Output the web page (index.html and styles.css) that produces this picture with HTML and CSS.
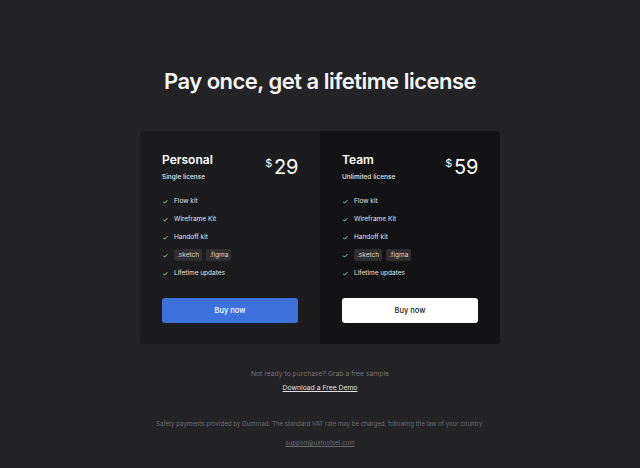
FILE: index.html
```
<!DOCTYPE html>
<html lang="en">
<head>
    <meta charset="UTF-8">
    <title>Pricing</title>
    <link rel="stylesheet" href="styles.css">
</head>
<body>
<div class="page">
    <h1 class="headline">Pay once, get a lifetime license</h1>

    <div class="plans">
        <div class="plan personal">
            <div class="planHead">
                <div>
                    <div class="planName">Personal</div>
                    <div class="planSub">Single license</div>
                </div>
                <div class="price"><span class="currency">$</span>29</div>
            </div>
            <ul class="features">
                <li><span class="check">&#10003;</span>Flow kit</li>
                <li><span class="check">&#10003;</span>Wireframe Kit</li>
                <li><span class="check">&#10003;</span>Handoff kit</li>
                <li><span class="check">&#10003;</span><span class="tag">.sketch</span><span class="tag">.figma</span></li>
                <li><span class="check">&#10003;</span>Lifetime updates</li>
            </ul>
            <a class="buyBtn blue" href="#">Buy now</a>
        </div>
        <div class="plan team">
            <div class="planHead">
                <div>
                    <div class="planName">Team</div>
                    <div class="planSub">Unlimited license</div>
                </div>
                <div class="price"><span class="currency">$</span>59</div>
            </div>
            <ul class="features">
                <li><span class="check">&#10003;</span>Flow kit</li>
                <li><span class="check">&#10003;</span>Wireframe Kit</li>
                <li><span class="check">&#10003;</span>Handoff kit</li>
                <li><span class="check">&#10003;</span><span class="tag">.sketch</span><span class="tag">.figma</span></li>
                <li><span class="check">&#10003;</span>Lifetime updates</li>
            </ul>
            <a class="buyBtn white" href="#">Buy now</a>
        </div>
    </div>

    <p class="sample">Not ready to purchase? Grab a free sample</p>
    <a class="demo" href="#">Download a Free Demo</a>

    <p class="legal">Safety payments provided by Gumroad. The standard VAT rate may be charged, following the law of your country.</p>
    <a class="support" href="#">support@uxtoolset.com</a>
</div>
</body>
</html>
```
FILE: styles.css
```
html, body {
    margin: 0;
    padding: 0;
    background: #232326;
    font-family: Inter, "Liberation Sans", sans-serif;
    color: #fff;
}

.page {
    display: flex;
    flex-direction: column;
    align-items: center;
    padding-top: 65px;
    height: 468px;
    box-sizing: border-box;
}

.headline {
    margin: 0;
    font-size: 22px;
    font-weight: 600;
    letter-spacing: -0.5px;
    line-height: 32px;
    color: #f5f5f5;
}

.plans {
    display: flex;
    width: 360px;
    margin-top: 34px;
    border-radius: 4px;
    overflow: hidden;
}

.plan {
    flex: 1;
    padding: 20px 22px 21px 22px;
}

.personal {
    background: #1c1c1e;
}

.team {
    background: #131315;
}

.planHead {
    display: flex;
    justify-content: space-between;
    align-items: flex-start;
}

.planName {
    font-size: 12px;
    font-weight: 600;
    line-height: 16px;
    margin-top: 1px;
}

.planSub {
    font-size: 6.5px;
    font-weight: 500;
    color: #e4e4e4;
    margin-top: 5px;
}

.price {
    font-size: 20px;
    font-weight: 400;
    line-height: 24px;
    letter-spacing: -0.3px;
}

.currency {
    font-size: 11px;
    vertical-align: 7px;
    margin-right: 2px;
}

.features {
    list-style: none;
    margin: 11px 0 0 0;
    padding: 0;
}

.features li {
    display: flex;
    align-items: center;
    height: 18px;
    font-size: 6.5px;
    color: #e2e2e2;
}

.check {
    width: 12px;
    font-size: 7px;
    color: #9fe0a8;
}

.tag {
    background: #2f2f32;
    border-radius: 2px;
    padding: 2px 3px;
    margin-right: 4px;
    color: #d6d6d6;
}

.buyBtn {
    display: flex;
    justify-content: center;
    align-items: center;
    height: 25px;
    margin-top: 16px;
    border-radius: 3px;
    font-size: 7.5px;
    font-weight: 500;
    text-decoration: none;
}

.blue {
    background: #3d72dd;
    color: #fff;
}

.white {
    background: #fff;
    color: #1a1a1a;
}

.sample {
    margin: 25px 0 0 0;
    font-size: 6.8px;
    color: #707074;
}

.demo {
    margin-top: 5px;
    font-size: 6.8px;
    color: #e0e0e0;
}

.legal {
    margin: 28px 0 0 0;
    font-size: 6.1px;
    color: #6c6c70;
}

.support {
    margin-top: 12px;
    font-size: 6.1px;
    color: #6c6c70;
}
```
